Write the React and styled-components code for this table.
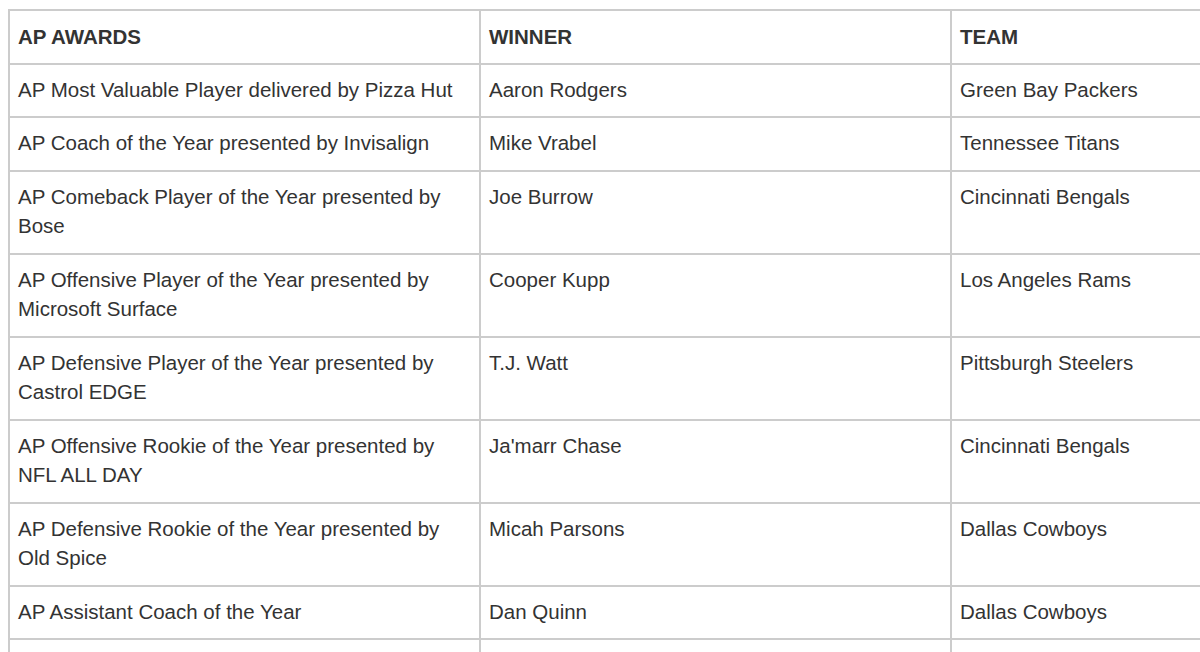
import React from "react";
import styled, { createGlobalStyle } from "styled-components";

const Global = createGlobalStyle`
  html, body {
    background: #fff;
    margin: 0;
    overflow: hidden;
  }
  body {
    font-family: "Liberation Sans", Arial, sans-serif;
    color: #333;
  }
`;

const Page = styled.div`
  width: 1200px;
  height: 652px;
  overflow: hidden;
  padding: 9px 0 0 8px;
  box-sizing: border-box;
`;

const Table = styled.table`
  border-collapse: collapse;
  table-layout: fixed;
  width: 1413px;
  border: 2px solid #cccccc;
  font-size: 20.5px;
  line-height: 29.5px;
`;

const Col = styled.col`
  width: 471px;
`;

const HeadCell = styled.th`
  border: 2px solid #cccccc;
  padding: 11px 9px 11px 8px;
  text-align: left;
  vertical-align: top;
  font-weight: 700;
  color: #333;
`;

const Cell = styled.td`
  border: 2px solid #cccccc;
  padding: 10px 9px 12px 8px;
  text-align: left;
  vertical-align: top;
  font-weight: 400;
  color: #333;
`;

const rows = [
  ["AP Most Valuable Player delivered by Pizza Hut", "Aaron Rodgers", "Green Bay Packers"],
  ["AP Coach of the Year presented by Invisalign", "Mike Vrabel", "Tennessee Titans"],
  ["AP Comeback Player of the Year presented by Bose", "Joe Burrow", "Cincinnati Bengals"],
  ["AP Offensive Player of the Year presented by Microsoft Surface", "Cooper Kupp", "Los Angeles Rams"],
  ["AP Defensive Player of the Year presented by Castrol EDGE", "T.J. Watt", "Pittsburgh Steelers"],
  ["AP Offensive Rookie of the Year presented by NFL ALL DAY", "Ja'marr Chase", "Cincinnati Bengals"],
  ["AP Defensive Rookie of the Year presented by Old Spice", "Micah Parsons", "Dallas Cowboys"],
  ["AP Assistant Coach of the Year", "Dan Quinn", "Dallas Cowboys"],
  ["", "", ""],
];

export default function App() {
  return (
    <>
      <Global />
      <Page>
        <Table>
          <colgroup>
            <Col />
            <Col />
            <Col />
          </colgroup>
          <thead>
            <tr>
              <HeadCell>AP AWARDS</HeadCell>
              <HeadCell>WINNER</HeadCell>
              <HeadCell>TEAM</HeadCell>
            </tr>
          </thead>
          <tbody>
            {rows.map((r, i) => (
              <tr key={i}>
                <Cell>{r[0] || "\u00a0"}</Cell>
                <Cell>{r[1] || "\u00a0"}</Cell>
                <Cell>{r[2] || "\u00a0"}</Cell>
              </tr>
            ))}
          </tbody>
        </Table>
      </Page>
    </>
  );
}
